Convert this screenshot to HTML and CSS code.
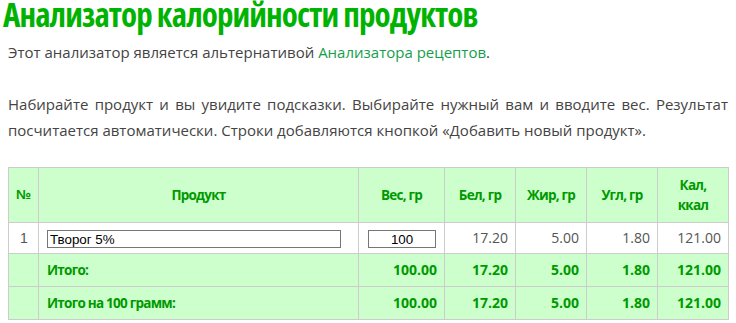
FILE: index.html
```html
<!DOCTYPE html>
<html lang="ru">
<head>
<meta charset="utf-8">
<title>Анализатор калорийности продуктов</title>
<link rel="stylesheet" href="styles.css">
</head>
<body>
<h1 class="title">Анализатор калорийности продуктов</h1>
<p class="text">Этот анализатор является альтернативой <a class="link" href="#">Анализатора рецептов</a>.</p>
<p class="text text-justify">Набирайте продукт и вы увидите подсказки. Выбирайте нужный вам и вводите вес. Результат посчитается автоматически. Строки добавляются кнопкой «Добавить новый продукт».</p>
<table class="calc">
  <thead>
    <tr>
      <th class="c-num">№</th>
      <th class="c-prod">Продукт</th>
      <th class="c-weight">Вес, гр</th>
      <th class="c-val">Бел, гр</th>
      <th class="c-val">Жир, гр</th>
      <th class="c-val">Угл, гр</th>
      <th class="c-val">Кал,<br>ккал</th>
    </tr>
  </thead>
  <tbody>
    <tr class="row-data">
      <td class="num">1</td>
      <td class="prod"><input class="inp-prod" type="text" value="Творог 5%"></td>
      <td class="weight"><input class="inp-weight" type="text" value="100"></td>
      <td class="val">17.20</td>
      <td class="val">5.00</td>
      <td class="val">1.80</td>
      <td class="val">121.00</td>
    </tr>
    <tr class="row-total">
      <td></td>
      <td class="label">Итого:</td>
      <td class="val">100.00</td>
      <td class="val">17.20</td>
      <td class="val">5.00</td>
      <td class="val">1.80</td>
      <td class="val">121.00</td>
    </tr>
    <tr class="row-total">
      <td></td>
      <td class="label">Итого на 100 грамм:</td>
      <td class="val">100.00</td>
      <td class="val">17.20</td>
      <td class="val">5.00</td>
      <td class="val">1.80</td>
      <td class="val">121.00</td>
    </tr>
  </tbody>
</table>
</body>
</html>
```
FILE: styles.css
```css
html, body {
  margin: 0;
  padding: 0;
  background: #ffffff;
}
body {
  font-family: "Open Sans", "DejaVu Sans", sans-serif;
  color: #444444;
}
.title {
  margin: 0;
  padding-left: 3px;
  font-size: 33px;
  line-height: 30px;
  font-weight: 700;
  font-stretch: 75%;
  letter-spacing: -0.9px;
  color: #00b300;
}
.text {
  margin: 9px 8px 0;
  font-size: 15px;
  line-height: 26px;
}
.text-justify {
  margin-top: 26px;
  text-align: justify;
}
.link {
  color: #14a04a;
  text-decoration: none;
}
.calc {
  margin: 24px 8px 0;
  width: 721px;
  border-collapse: collapse;
  font-size: 14px;
  line-height: 20px;
}
.calc th, .calc td {
  border: 1px solid #cccccc;
  padding: 6px 7px 6px 8px;
}
.calc thead th {
  background: #ccffcc;
  color: #009900;
  font-size: 13.5px;
  font-weight: 700;
  letter-spacing: -0.75px;
  text-align: center;
  padding: 7px 4px;
}
.c-num { width: 21px; }
.c-weight { width: 77px; }
.c-val { width: 62px; }
.calc th.c-num {
  font-family: "Liberation Sans", Arial, sans-serif;
  letter-spacing: 0;
}
.row-data td {
  padding-top: 5px;
  padding-bottom: 5px;
  color: #555555;
}
.num {
  text-align: center;
  font-family: "Liberation Sans", Arial, sans-serif;
}
.weight { text-align: center; }
.val { text-align: right; }
.inp-prod, .inp-weight {
  box-sizing: border-box;
  height: 18px;
  border: 1px solid #767676;
  padding: 0 2px;
  margin: 0;
  font-family: "Liberation Sans", Arial, sans-serif;
  font-size: 13.33px;
  color: #000000;
  vertical-align: middle;
  background: #ffffff;
}
.inp-prod { width: 294px; }
.inp-weight { width: 68px; text-align: center; }
.row-total td {
  background: #ccffcc;
  color: #009900;
  font-size: 14px;
  font-weight: 700;
}
.row-total .label {
  font-size: 13.5px;
  letter-spacing: -0.75px;
}
```
